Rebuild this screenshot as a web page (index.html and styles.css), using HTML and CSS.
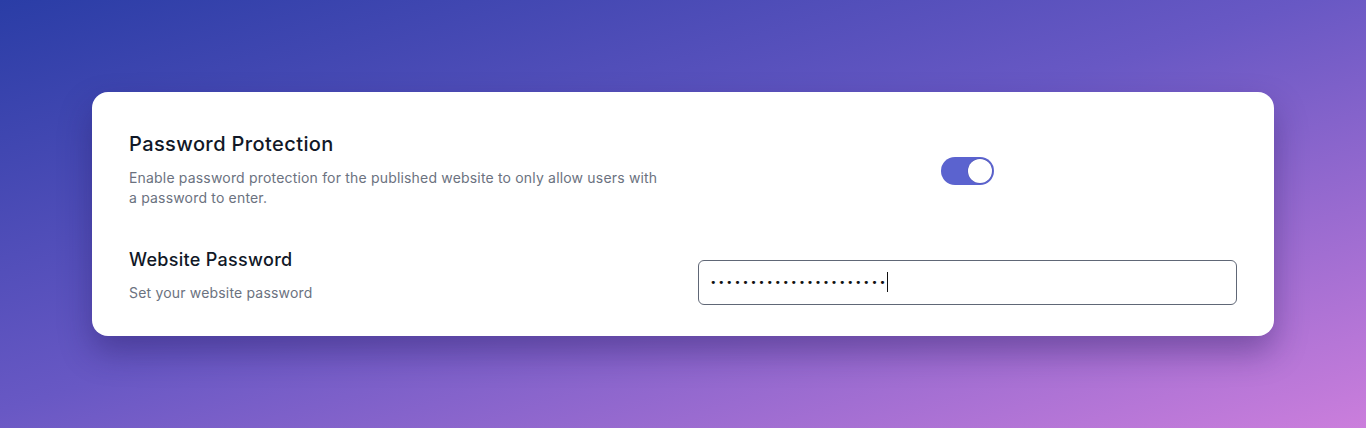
FILE: index.html
```html
<!DOCTYPE html>
<html lang="en">
<head>
    <meta charset="UTF-8">
    <meta name="viewport" content="width=device-width, initial-scale=1.0">
    <title>Website Settings</title>
    <link rel="stylesheet" href="styles.css">
</head>
<body>
    <div class="page">
        <div class="card">
            <div class="row">
                <div class="info">
                    <h2>Password Protection</h2>
                    <p>Enable password protection for the published website to only allow users with a password to enter.</p>
                </div>
                <div class="control control-center">
                    <div class="toggle on"><span class="knob"></span></div>
                </div>
            </div>

            <div class="row row-end">
                <div class="info">
                    <h2 class="small">Website Password</h2>
                    <p>Set your website password</p>
                </div>
                <div class="control">
                    <div class="field">
                        <span class="dots">••••••••••••••••••••••</span><span class="caret"></span>
                    </div>
                </div>
            </div>
        </div>
    </div>
</body>
</html>
```

FILE: styles.css
```css
html, body {
    margin: 0;
    height: 100%;
}
body {
    font-family: Inter, "Noto Sans", sans-serif;
    background: linear-gradient(to bottom right, #2a3da6 0%, #6858c4 48%, #cb7edc 100%);
    overflow: hidden;
}
.page {
    padding: 92px 92px 0 92px;
}
.card {
    background: #fff;
    border-radius: 16px;
    padding: 38px 37px 33px 37px;
    box-shadow: 0 16px 32px rgba(34, 22, 90, 0.38);
    display: flex;
    flex-direction: column;
    gap: 40px;
}
.row {
    display: grid;
    grid-template-columns: 1fr 1fr;
    column-gap: 30px;
    align-items: start;
}
.row-end {
    align-items: end;
}
.info h2 {
    margin: 0;
    font-size: 20px;
    font-weight: 500;
    line-height: 28px;
    color: #111827;
    letter-spacing: 0.4px;
}
.info h2.small {
    font-size: 18px;
    line-height: 26px;
    letter-spacing: 0.3px;
}
.info p {
    margin: 10px 0 0 0;
    font-size: 14px;
    line-height: 19.5px;
    color: #6b7280;
    letter-spacing: 0.18px;
}
.control {
    display: flex;
}
.control-center {
    justify-content: center;
}
.toggle {
    width: 53px;
    height: 28px;
    margin-top: 27px;
    border-radius: 14px;
    background: #5b63cf;
    position: relative;
}
.toggle .knob {
    position: absolute;
    top: 2px;
    right: 2px;
    width: 24px;
    height: 24px;
    border-radius: 50%;
    background: #fff;
    box-shadow: 0 0 0 0.5px rgba(60, 60, 120, 0.3);
}
.field {
    width: 100%;
    height: 45px;
    box-sizing: border-box;
    border: 1.5px solid #606776;
    border-radius: 6px;
    padding: 0 11px;
    display: flex;
    align-items: center;
    margin-bottom: -2px;
}
.dots {
    font-family: "DejaVu Sans", sans-serif;
    font-size: 11px;
    letter-spacing: 1.57px;
    color: #111;
}
.caret {
    width: 1px;
    height: 20px;
    background: #111;
}
```
